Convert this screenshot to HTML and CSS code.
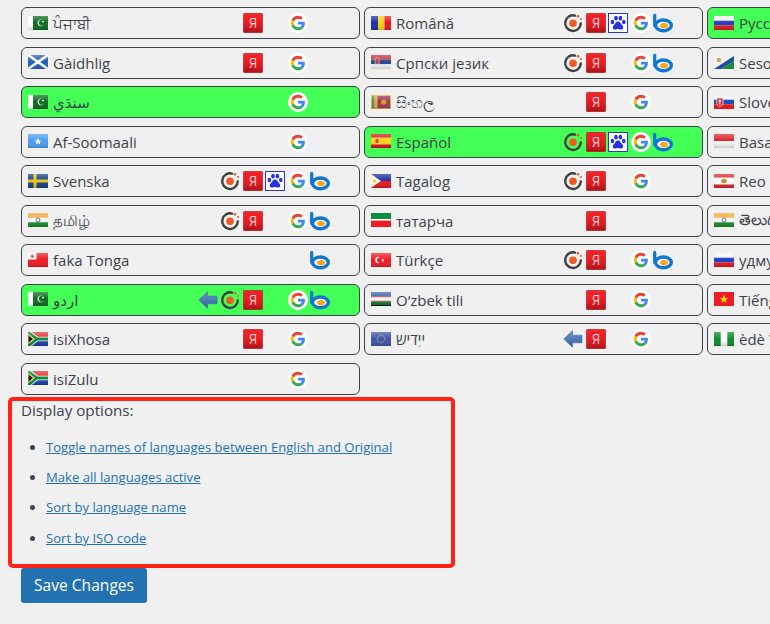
FILE: index.html
```html
<!DOCTYPE html>
<html lang="en">
<head>
<meta charset="UTF-8" />
<title>Language settings</title>
<link rel="stylesheet" href="styles.css">
</head>
<body>
<svg class="defs" width="0" height="0" aria-hidden="true">
  <defs>
    <linearGradient id="sheen" x1="0" y1="0" x2="0" y2="1">
      <stop offset="0" stop-color="#fff" stop-opacity=".3"/>
      <stop offset=".5" stop-color="#fff" stop-opacity="0"/>
      <stop offset="1" stop-color="#000" stop-opacity=".18"/>
    </linearGradient>
    <linearGradient id="yaRed" x1="0" y1="0" x2="0" y2="1">
      <stop offset="0" stop-color="#f3252b"/>
      <stop offset=".6" stop-color="#e01c22"/>
      <stop offset="1" stop-color="#a81418"/>
    </linearGradient>
    <linearGradient id="arrowBlue" x1="0" y1="0" x2="0" y2="1">
      <stop offset="0" stop-color="#6d97cc"/>
      <stop offset="1" stop-color="#2f5f9e"/>
    </linearGradient>

    <!-- engine icons -->
    <symbol id="i-arrow" viewBox="0 0 20 20"><path d="M.8 10 9.5 1.8V6.2H19V13.8H9.5V18.2Z" fill="url(#arrowBlue)" stroke="#3b6aa8" stroke-width=".6"/></symbol>
    <symbol id="i-circle" viewBox="0 0 20 20"><path d="M12 2.6A7.8 7.8 0 1 0 17.8 10.5" fill="none" stroke="#3f3f3f" stroke-width="2.4" stroke-linecap="round"/><circle cx="10" cy="10.2" r="3.8" fill="#f05a22"/><circle cx="15" cy="3.2" r="1.3" fill="#f05a22"/><circle cx="18" cy="6" r="1" fill="#f05a22"/></symbol>
    <symbol id="i-ya" viewBox="0 0 20 20"><rect x=".3" y=".3" width="19.4" height="19.4" rx="1.5" fill="url(#yaRed)" stroke="#a81c1f" stroke-width=".6"/><text transform="translate(10 15.3) scale(.72 1)" text-anchor="middle" font-family="Liberation Sans" font-size="15" fill="#f8d4d4">Я</text></symbol>
    <symbol id="i-paw" viewBox="0 0 20 20"><rect x=".5" y=".5" width="19" height="19" fill="#fff" stroke="#2932e1"/><g fill="#2932e1"><ellipse cx="4.4" cy="9" rx="1.8" ry="2.3"/><ellipse cx="8" cy="5.2" rx="1.8" ry="2.4"/><ellipse cx="12.4" cy="5.2" rx="1.8" ry="2.4"/><ellipse cx="15.8" cy="9" rx="1.8" ry="2.3"/><path d="M10 8.6C7.8 8.6 7.4 10.8 5.8 12.2 4.2 13.6 4.6 16.6 7 16.6 8.4 16.6 9 16 10 16S11.6 16.6 13 16.6C15.4 16.6 15.8 13.6 14.2 12.2 12.6 10.8 12.2 8.6 10 8.6Z"/></g></symbol>
    <symbol id="i-g" viewBox="0 0 20 20"><circle cx="10" cy="10" r="10" fill="#fff"/><g transform="translate(2.8 2.8) scale(.3)"><path fill="#ea4335" d="M24 9.5c3.54 0 6.71 1.22 9.21 3.6l6.85-6.85C35.9 2.38 30.47 0 24 0 14.62 0 6.51 5.38 2.56 13.22l7.98 6.19C12.43 13.72 17.74 9.5 24 9.5z"/><path fill="#4285f4" d="M46.98 24.55c0-1.57-.15-3.09-.38-4.55H24v9.02h12.94c-.58 2.96-2.26 5.48-4.78 7.18l7.73 6c4.51-4.18 7.09-10.36 7.09-17.65z"/><path fill="#fbbc05" d="M10.53 28.59c-.48-1.45-.76-2.99-.76-4.59s.27-3.14.76-4.59l-7.98-6.19C.92 16.46 0 20.12 0 24c0 3.88.92 7.54 2.56 10.78l7.97-6.19z"/><path fill="#34a853" d="M24 48c6.48 0 11.93-2.13 15.89-5.81l-7.73-6c-2.15 1.45-4.92 2.3-8.16 2.3-6.26 0-11.57-4.22-13.47-9.91l-7.98 6.19C6.51 42.62 14.62 48 24 48z"/></g></symbol>
    <symbol id="i-b" viewBox="0 0 20 20"><path d="M1.7 2.4V12.4" fill="none" stroke="#0f77cf" stroke-width="3.2" stroke-linecap="round"/><ellipse cx="10.4" cy="12.4" rx="7.9" ry="5.4" fill="#fff" stroke="#0f77cf" stroke-width="3.4"/><ellipse cx="11" cy="12.6" rx="4" ry="2.7" fill="#f9a61a"/></symbol>

    <!-- flags -->
    <symbol id="f-pk" viewBox="0 0 20 14"><rect width="20" height="14" fill="#0b6b1f"/><rect width="5" height="14" fill="#fff"/><path d="M15 4A3.4 3.4 0 1 0 15.6 9 3 3 0 1 1 15 4Z" fill="#fff"/><circle cx="15" cy="5.6" r=".9" fill="#fff"/><rect width="20" height="14" fill="url(#sheen)"/></symbol>
    <symbol id="f-gd" viewBox="0 0 20 14"><rect width="20" height="14" fill="#1f60b8"/><path d="M0 0 20 14M20 0 0 14" stroke="#fff" stroke-width="2.6"/><rect width="20" height="14" fill="url(#sheen)"/></symbol>
    <symbol id="f-so" viewBox="0 0 20 14"><rect width="20" height="14" fill="#4d9df0"/><path d="M10 4 11 6.5H13.4L11.5 8 12.2 10.4 10 9 7.8 10.4 8.5 8 6.6 6.5H9Z" fill="#fff"/><rect width="20" height="14" fill="url(#sheen)"/></symbol>
    <symbol id="f-se" viewBox="0 0 20 14"><rect width="20" height="14" fill="#11428f"/><path d="M0 7H20M7 0V14" stroke="#f0c419" stroke-width="3"/><rect width="20" height="14" fill="url(#sheen)"/></symbol>
    <symbol id="f-in" viewBox="0 0 20 14"><rect width="20" height="14" fill="#f5f5f5"/><rect width="20" height="4.7" fill="#f3a93a"/><rect y="9.3" width="20" height="4.7" fill="#1a8a2c"/><circle cx="10" cy="7" r="2" fill="none" stroke="#3b4f9e" stroke-width=".8"/><rect width="20" height="14" fill="url(#sheen)"/></symbol>
    <symbol id="f-to" viewBox="0 0 20 14"><rect width="20" height="14" fill="#ee1c25"/><rect width="8.5" height="6.5" fill="#fff"/><path d="M4.2 1.5V5M2.5 3.2H6" stroke="#ee1c25" stroke-width="1.3"/><rect width="20" height="14" fill="url(#sheen)"/></symbol>
    <symbol id="f-za" viewBox="0 0 20 14"><rect width="20" height="7" fill="#e4322b"/><rect y="7" width="20" height="7" fill="#1b3fa6"/><path d="M0 0 9 7 0 14M9 7H20" fill="none" stroke="#fff" stroke-width="4.6"/><path d="M0 0 9 7 0 14M9 7H20" fill="none" stroke="#0c8a3c" stroke-width="2.8"/><path d="M0 2.5 5.5 7 0 11.5Z" fill="#111" stroke="#f5c518"/><rect width="20" height="14" fill="url(#sheen)"/></symbol>
    <symbol id="f-ro" viewBox="0 0 20 14"><rect width="7" height="14" fill="#1a2fa8"/><rect x="7" width="6.5" height="14" fill="#fcd116"/><rect x="13.5" width="6.5" height="14" fill="#e4191f"/><rect width="20" height="14" fill="url(#sheen)"/></symbol>
    <symbol id="f-rs" viewBox="0 0 20 14"><rect width="20" height="14" fill="#f5f5f5"/><rect width="20" height="4.7" fill="#c6303d"/><rect y="4.7" width="20" height="4.6" fill="#234a8f"/><rect x="4.2" y="2.8" width="4" height="6.6" rx="1.6" fill="#c6363c" stroke="#eee" stroke-width=".5"/><rect y="9.3" width="20" height="4.7" fill="#f5f5f5"/><rect width="20" height="14" fill="url(#sheen)"/></symbol>
    <symbol id="f-lk" viewBox="0 0 20 14"><rect width="20" height="14" fill="#e0ac3c"/><rect x="1" y="1" width="2.2" height="12" fill="#3f9a5a"/><rect x="3.2" y="1" width="2.2" height="12" fill="#e89a3c"/><rect x="6.5" y="1" width="12.5" height="12" fill="#9a3a52"/><circle cx="12.7" cy="7" r="2.6" fill="#d99a2b"/><rect width="20" height="14" fill="url(#sheen)"/></symbol>
    <symbol id="f-es" viewBox="0 0 20 14"><rect width="20" height="14" fill="#d8141c"/><rect y="3.5" width="20" height="7" fill="#fbd11b"/><rect x="4.5" y="5" width="3" height="4" fill="#c9443a"/><rect width="20" height="14" fill="url(#sheen)"/></symbol>
    <symbol id="f-ph" viewBox="0 0 20 14"><rect width="20" height="7" fill="#1a2fa0"/><rect y="7" width="20" height="7" fill="#e4191f"/><path d="M0 0 10 7 0 14Z" fill="#fdf7e0"/><circle cx="3.4" cy="7" r="1.5" fill="#f6c21c"/><rect width="20" height="14" fill="url(#sheen)"/></symbol>
    <symbol id="f-tt" viewBox="0 0 20 14"><rect width="20" height="6" fill="#0a8f3c"/><rect y="6" width="20" height="1.6" fill="#fff"/><rect y="7.6" width="20" height="6.4" fill="#ee1c25"/></symbol>
    <symbol id="f-tr" viewBox="0 0 20 14"><rect width="20" height="14" fill="#ee1c25"/><path d="M8.8 4.2A3.2 3.2 0 1 0 8.8 9.8 2.7 2.7 0 1 1 8.8 4.2Z" fill="#fff"/><path d="M11.8 5.4 12.3 6.6H13.6L12.6 7.4 13 8.7 11.8 7.9 10.6 8.7 11 7.4 10 6.6H11.3Z" fill="#fff"/><rect width="20" height="14" fill="url(#sheen)"/></symbol>
    <symbol id="f-uz" viewBox="0 0 20 14"><rect width="20" height="14" fill="#f5f5f5"/><rect width="20" height="4.4" fill="#3a62a8"/><rect y="9.6" width="20" height="4.4" fill="#0e7a2e"/><rect y="4.4" width="20" height=".8" fill="#b8242c"/><rect y="8.8" width="20" height=".8" fill="#b8242c"/><rect y="13" width="20" height="1" fill="#111"/><rect width="20" height="14" fill="url(#sheen)"/></symbol>
    <symbol id="f-eu" viewBox="0 0 20 14"><rect width="20" height="14" fill="#3f55a6"/><circle cx="10" cy="7" r="3.7" fill="none" stroke="#d8c04a" stroke-width="1" stroke-dasharray="1 1"/><rect width="20" height="14" fill="url(#sheen)"/></symbol>
    <symbol id="f-ru" viewBox="0 0 20 14"><rect width="20" height="14" fill="#f5f5f5"/><rect y="4.7" width="20" height="4.6" fill="#1f3fc4"/><rect y="9.3" width="20" height="4.7" fill="#e4191f"/><rect width="20" height="14" fill="url(#sheen)"/></symbol>
    <symbol id="f-st" viewBox="0 0 20 14"><rect width="20" height="14" fill="#f2f2f2"/><path d="M0 14 20 1V6L7 14Z" fill="#1d4e9c"/><path d="M7 14 20 6V14Z" fill="#1d8a3d"/><circle cx="5" cy="5" r="2.2" fill="#c9a66b"/></symbol>
    <symbol id="f-sk" viewBox="0 0 20 14"><rect width="20" height="14" fill="#f5f5f5"/><rect y="4.7" width="20" height="4.6" fill="#1c4fc0"/><rect y="9.3" width="20" height="4.7" fill="#e4191f"/><path d="M2.8 3H9V8.5C9 10.5 6 11.8 5.9 11.8S2.8 10.5 2.8 8.5Z" fill="#d8232a" stroke="#fff" stroke-width=".7"/><path d="M5.9 4.2V10M4.4 6H7.4" stroke="#fff"/></symbol>
    <symbol id="f-su" viewBox="0 0 20 14"><rect width="20" height="14" fill="#f5f5f5"/><rect width="20" height="7" fill="#d8232a"/><rect width="20" height="14" fill="url(#sheen)"/></symbol>
    <symbol id="f-ty" viewBox="0 0 20 14"><rect width="20" height="14" fill="#d8232a"/><rect y="3.5" width="20" height="7" fill="#fafafa"/><ellipse cx="10" cy="7" rx="2.8" ry="2.2" fill="#c98a2b"/><rect width="20" height="14" fill="url(#sheen)"/></symbol>
    <symbol id="f-vn" viewBox="0 0 20 14"><rect width="20" height="14" fill="#ee1c25"/><path d="M10 2.8 11.2 5.9H14.4L11.8 7.8 12.8 11 10 9 7.2 11 8.2 7.8 5.6 5.9H8.8Z" fill="#ffdf00"/></symbol>
    <symbol id="f-ng" viewBox="0 0 20 14"><rect width="20" height="14" fill="#0f8a2c"/><rect x="6.7" width="6.6" height="14" fill="#fafafa"/><rect width="20" height="14" fill="url(#sheen)"/></symbol>
  </defs>
</svg>

<form class="wrap">
  <div class="langs">
    <label class="lang"><svg class="flag"><use href="#f-pk"/></svg><span class="name">ਪੰਜਾਬੀ</span><span class="icons"><svg class="ic ya"><use href="#i-ya"/></svg><svg class="ic g"><use href="#i-g"/></svg></span></label>
    <label class="lang"><svg class="flag"><use href="#f-ro"/></svg><span class="name">Română</span><span class="icons"><svg class="ic circle"><use href="#i-circle"/></svg><svg class="ic ya"><use href="#i-ya"/></svg><svg class="ic paw"><use href="#i-paw"/></svg><svg class="ic g"><use href="#i-g"/></svg><svg class="ic b"><use href="#i-b"/></svg></span></label>
    <label class="lang active"><svg class="flag"><use href="#f-ru"/></svg><span class="name">Русский</span></label>

    <label class="lang"><svg class="flag"><use href="#f-gd"/></svg><span class="name">Gàidhlig</span><span class="icons"><svg class="ic ya"><use href="#i-ya"/></svg><svg class="ic g"><use href="#i-g"/></svg></span></label>
    <label class="lang"><svg class="flag"><use href="#f-rs"/></svg><span class="name">Српски језик</span><span class="icons"><svg class="ic circle"><use href="#i-circle"/></svg><svg class="ic ya"><use href="#i-ya"/></svg><svg class="ic g"><use href="#i-g"/></svg><svg class="ic b"><use href="#i-b"/></svg></span></label>
    <label class="lang"><svg class="flag"><use href="#f-st"/></svg><span class="name">Sesotho</span></label>

    <label class="lang active"><svg class="flag"><use href="#f-pk"/></svg><span class="name">سنڌي</span><span class="icons"><svg class="ic g"><use href="#i-g"/></svg></span></label>
    <label class="lang"><svg class="flag"><use href="#f-lk"/></svg><span class="name">සිංහල</span><span class="icons"><svg class="ic ya"><use href="#i-ya"/></svg><svg class="ic g"><use href="#i-g"/></svg></span></label>
    <label class="lang"><svg class="flag"><use href="#f-sk"/></svg><span class="name">Slovenčina</span></label>

    <label class="lang"><svg class="flag"><use href="#f-so"/></svg><span class="name">Af-Soomaali</span><span class="icons"><svg class="ic g"><use href="#i-g"/></svg></span></label>
    <label class="lang active"><svg class="flag"><use href="#f-es"/></svg><span class="name">Español</span><span class="icons"><svg class="ic circle"><use href="#i-circle"/></svg><svg class="ic ya"><use href="#i-ya"/></svg><svg class="ic paw"><use href="#i-paw"/></svg><svg class="ic g"><use href="#i-g"/></svg><svg class="ic b"><use href="#i-b"/></svg></span></label>
    <label class="lang"><svg class="flag"><use href="#f-su"/></svg><span class="name">Basa Sunda</span></label>

    <label class="lang"><svg class="flag"><use href="#f-se"/></svg><span class="name">Svenska</span><span class="icons"><svg class="ic circle"><use href="#i-circle"/></svg><svg class="ic ya"><use href="#i-ya"/></svg><svg class="ic paw"><use href="#i-paw"/></svg><svg class="ic g"><use href="#i-g"/></svg><svg class="ic b"><use href="#i-b"/></svg></span></label>
    <label class="lang"><svg class="flag"><use href="#f-ph"/></svg><span class="name">Tagalog</span><span class="icons"><svg class="ic circle"><use href="#i-circle"/></svg><svg class="ic ya"><use href="#i-ya"/></svg><svg class="ic g"><use href="#i-g"/></svg></span></label>
    <label class="lang"><svg class="flag"><use href="#f-ty"/></svg><span class="name">Reo Mā`ohi</span></label>

    <label class="lang"><svg class="flag"><use href="#f-in"/></svg><span class="name">தமிழ்</span><span class="icons"><svg class="ic circle"><use href="#i-circle"/></svg><svg class="ic ya"><use href="#i-ya"/></svg><svg class="ic g"><use href="#i-g"/></svg><svg class="ic b"><use href="#i-b"/></svg></span></label>
    <label class="lang"><svg class="flag"><use href="#f-tt"/></svg><span class="name">татарча</span><span class="icons"><svg class="ic ya"><use href="#i-ya"/></svg></span></label>
    <label class="lang"><svg class="flag"><use href="#f-in"/></svg><span class="name">తెలుగు</span></label>

    <label class="lang"><svg class="flag"><use href="#f-to"/></svg><span class="name">faka Tonga</span><span class="icons"><svg class="ic b"><use href="#i-b"/></svg></span></label>
    <label class="lang"><svg class="flag"><use href="#f-tr"/></svg><span class="name">Türkçe</span><span class="icons"><svg class="ic circle"><use href="#i-circle"/></svg><svg class="ic ya"><use href="#i-ya"/></svg><svg class="ic g"><use href="#i-g"/></svg><svg class="ic b"><use href="#i-b"/></svg></span></label>
    <label class="lang"><svg class="flag"><use href="#f-ru"/></svg><span class="name">удмурт</span></label>

    <label class="lang active"><svg class="flag"><use href="#f-pk"/></svg><span class="name">اردو</span><span class="icons"><svg class="ic arrow"><use href="#i-arrow"/></svg><svg class="ic circle"><use href="#i-circle"/></svg><svg class="ic ya"><use href="#i-ya"/></svg><svg class="ic g"><use href="#i-g"/></svg><svg class="ic b"><use href="#i-b"/></svg></span></label>
    <label class="lang"><svg class="flag"><use href="#f-uz"/></svg><span class="name">O‘zbek tili</span><span class="icons"><svg class="ic ya"><use href="#i-ya"/></svg><svg class="ic g"><use href="#i-g"/></svg></span></label>
    <label class="lang"><svg class="flag"><use href="#f-vn"/></svg><span class="name">Tiếng Việt</span></label>

    <label class="lang"><svg class="flag"><use href="#f-za"/></svg><span class="name">isiXhosa</span><span class="icons"><svg class="ic ya"><use href="#i-ya"/></svg><svg class="ic g"><use href="#i-g"/></svg></span></label>
    <label class="lang"><svg class="flag"><use href="#f-eu"/></svg><span class="name">ייִדיש</span><span class="icons"><svg class="ic circle"><use href="#i-arrow"/></svg><svg class="ic ya"><use href="#i-ya"/></svg><svg class="ic g"><use href="#i-g"/></svg></span></label>
    <label class="lang"><svg class="flag"><use href="#f-ng"/></svg><span class="name">èdè Yorùbá</span></label>

    <label class="lang"><svg class="flag"><use href="#f-za"/></svg><span class="name">isiZulu</span><span class="icons"><svg class="ic g"><use href="#i-g"/></svg></span></label>
  </div>

  <div class="options">
    <p class="options-title">Display options:</p>
    <ul class="options-list">
      <li><a href="#">Toggle names of languages between English and Original</a></li>
      <li><a href="#">Make all languages active</a></li>
      <li><a href="#">Sort by language name</a></li>
      <li><a href="#">Sort by ISO code</a></li>
    </ul>
  </div>

  <button class="save" type="button">Save Changes</button>
</form>
</body>
</html>
```

FILE: styles.css
```css
* {
  margin: 0; padding: 0; box-sizing: border-box;
}
html, body {
  height: 100%;
  overflow: hidden;
  background: #f0f0f1;
  color: #3c434a;
  font-family: "Open Sans", "DejaVu Sans", "Noto Sans", sans-serif;
}
.defs {
  position: absolute;
}
.wrap {
  padding: 7px 0 0 8px;
}

/* lista de idiomas */
.langs {
  display: grid;
  grid-template-columns: repeat(3, 339px);
  grid-auto-rows: 32px;
  column-gap: 4px;
  row-gap: 7.5px;
  margin-left: 13px;
}
.lang {
  display: flex;
  align-items: center;
  height: 32px;
  padding: 0 29px 0 6px;
  border: 1px solid #3c434a;
  border-radius: 6px;
  font-size: 15px;
  white-space: nowrap;
}
.lang.active {
  background: #44ff55;
}
.flag {
  flex: none;
  width: 20px;
  height: 14px;
  margin: -1px 5px 0 0;
}
.name {
  flex: 1;
}
.icons {
  display: grid;
  grid-template-columns: repeat(6, 20px);
  column-gap: 2.5px;
}
.ic {
  grid-row: 1;
  width: 20px;
  height: 20px;
}
.arrow { grid-column: 1; }
.circle { grid-column: 2; }
.ya { grid-column: 3; }
.paw { grid-column: 4; }
.g { grid-column: 5; }
.b { grid-column: 6; }

/* opciones */
.options {
  width: 447px;
  height: 171px;
  margin-top: 2px;
  padding-left: 9px;
  border: 4px solid #ff2215;
  border-radius: 5px;
}
.options-title {
  font-size: 15.2px;
  line-height: 18px;
}
.options-list {
  margin-top: 18.3px;
  padding-left: 25px;
  font-size: 13.1px;
  line-height: 20px;
}
.options-list li {
  margin-bottom: 10.3px;
}
.options-list a {
  color: #2271b1;
}
.save {
  display: block;
  width: 126px;
  height: 35px;
  margin-left: 13px;
  border: 0;
  border-radius: 3px;
  background: #2271b1;
  color: #fff;
  font: 15.6px "Open Sans", sans-serif;
}
```
